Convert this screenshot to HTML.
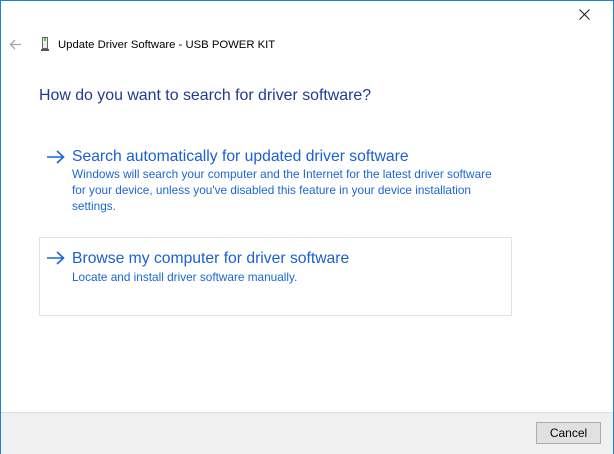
<!DOCTYPE html>
<html><head><style>
body{margin:0;width:614px;height:454px;overflow:hidden;font-family:"Liberation Sans",sans-serif;background:#fff;position:relative}
.frame{position:absolute;left:0;top:0;width:612px;height:452px;border:1px solid #1883d7;}
.abs{position:absolute;white-space:nowrap}
.title{left:58px;top:39px;font-size:11.3px;color:#000}
.h{left:39px;top:87px;font-size:15.9px;color:#1f3a93}
.lt{font-size:15.7px;color:#1a5fd6}
.d{font-size:11.8px;color:#1a66d8;line-height:16px}
.box{position:absolute;left:39px;top:237px;width:471px;height:77px;border:1px solid #e3e3e3}
.foot{position:absolute;left:1px;top:412px;width:612px;height:41px;background:#f0f0f0;border-top:1px solid #dfdfdf}
.btn{position:absolute;left:536px;top:422px;width:63px;height:20px;border:1px solid #adadad;background:#e1e1e1;font-size:12px;text-align:center;line-height:20px;color:#000}
</style></head><body>
<div class="frame"></div>
<svg class="abs" style="left:579px;top:9px" width="11" height="11"><path d="M0.5 0.5L10.5 10.5M10.5 0.5L0.5 10.5" stroke="#222" stroke-width="1.1"/></svg>
<svg class="abs" style="left:9px;top:39px" width="13" height="11"><path d="M12 5.5H1.5M6 1L1.5 5.5L6 10" stroke="#a8a8a8" stroke-width="1.3" fill="none"/></svg>
<svg class="abs" style="left:40px;top:37px" width="10" height="14"><rect x="2.5" y="0.5" width="5" height="11" fill="#eee" stroke="#666"/><rect x="4" y="1" width="2" height="3" fill="#4c4"/><rect x="1" y="12" width="8" height="2" fill="#555"/></svg>
<div class="abs title">Update Driver Software - USB POWER KIT</div>
<div class="abs h">How do you want to search for driver software?</div>
<div class="box"></div>
<svg class="abs" style="left:47px;top:150px" width="18" height="14"><path d="M0 7H16.5M10 1L16.5 7L10 13" stroke="#1a66d8" stroke-width="1.6" fill="none"/></svg>
<div class="abs lt" style="left:72px;top:148px">Search automatically for updated driver software</div>
<div class="abs d" style="left:72px;top:166px">Windows will search your computer and the Internet for the latest driver software<br>for your device, unless you've disabled this feature in your device installation<br>settings.</div>
<svg class="abs" style="left:47px;top:251px" width="18" height="14"><path d="M0 7H16.5M10 1L16.5 7L10 13" stroke="#1a66d8" stroke-width="1.6" fill="none"/></svg>
<div class="abs lt" style="left:72px;top:250px">Browse my computer for driver software</div>
<div class="abs d" style="left:72px;top:269px">Locate and install driver software manually.</div>
<div class="foot"></div>
<div class="btn">Cancel</div>
</body></html>
